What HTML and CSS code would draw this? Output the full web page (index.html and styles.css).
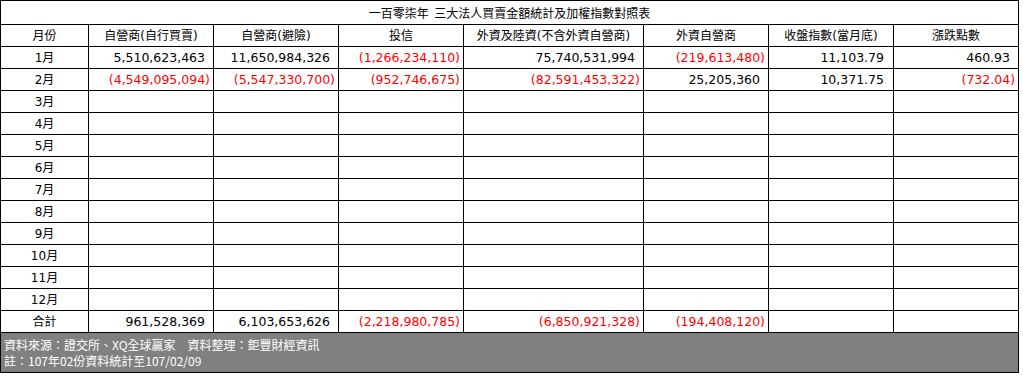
FILE: index.html
```html
<!DOCTYPE html>
<html lang="zh-Hant">
<head>
<meta charset="utf-8">
<title>一百零柒年 三大法人買賣金額統計及加權指數對照表</title>
<link rel="stylesheet" href="styles.css">
</head>
<body>
<table class="sheet">
  <colgroup>
    <col class="c-month">
    <col class="c-std">
    <col class="c-std">
    <col class="c-std">
    <col class="c-wide">
    <col class="c-std">
    <col class="c-std">
    <col class="c-std">
  </colgroup>
  <tbody>
    <tr class="title-row"><td colspan="8" class="title">一百零柒年&nbsp; 三大法人買賣金額統計及加權指數對照表</td></tr>
    <tr class="row head">
      <td>月份</td><td>自營商(自行買賣)</td><td>自營商(避險)</td><td>投信</td><td>外資及陸資(不含外資自營商)</td><td>外資自營商</td><td>收盤指數(當月底)</td><td>漲跌點數</td>
    </tr>
    <tr class="row">
      <td class="m">1月</td>
      <td class="n pos">5,510,623,463</td>
      <td class="n pos">11,650,984,326</td>
      <td class="n neg">(1,266,234,110)</td>
      <td class="n pos">75,740,531,994</td>
      <td class="n neg">(219,613,480)</td>
      <td class="n idx">11,103.79</td>
      <td class="n pos">460.93</td>
    </tr>
    <tr class="row">
      <td class="m">2月</td>
      <td class="n neg">(4,549,095,094)</td>
      <td class="n neg">(5,547,330,700)</td>
      <td class="n neg">(952,746,675)</td>
      <td class="n neg">(82,591,453,322)</td>
      <td class="n pos">25,205,360</td>
      <td class="n idx">10,371.75</td>
      <td class="n neg">(732.04)</td>
    </tr>
    <tr class="row"><td class="m">3月</td><td></td><td></td><td></td><td></td><td></td><td></td><td></td></tr>
    <tr class="row"><td class="m">4月</td><td></td><td></td><td></td><td></td><td></td><td></td><td></td></tr>
    <tr class="row"><td class="m">5月</td><td></td><td></td><td></td><td></td><td></td><td></td><td></td></tr>
    <tr class="row"><td class="m">6月</td><td></td><td></td><td></td><td></td><td></td><td></td><td></td></tr>
    <tr class="row"><td class="m">7月</td><td></td><td></td><td></td><td></td><td></td><td></td><td></td></tr>
    <tr class="row"><td class="m">8月</td><td></td><td></td><td></td><td></td><td></td><td></td><td></td></tr>
    <tr class="row"><td class="m">9月</td><td></td><td></td><td></td><td></td><td></td><td></td><td></td></tr>
    <tr class="row"><td class="m">10月</td><td></td><td></td><td></td><td></td><td></td><td></td><td></td></tr>
    <tr class="row"><td class="m">11月</td><td></td><td></td><td></td><td></td><td></td><td></td><td></td></tr>
    <tr class="row"><td class="m">12月</td><td></td><td></td><td></td><td></td><td></td><td></td><td></td></tr>
    <tr class="row">
      <td class="m">合計</td>
      <td class="n pos">961,528,369</td>
      <td class="n pos">6,103,653,626</td>
      <td class="n neg">(2,218,980,785)</td>
      <td class="n neg">(6,850,921,328)</td>
      <td class="n neg">(194,408,120)</td>
      <td></td>
      <td></td>
    </tr>
    <tr class="foot-row">
      <td colspan="8" class="foot">資料來源：證交所、XQ全球贏家　資料整理：鉅豐財經資訊<br>註：107年02份資料統計至107/02/09</td>
    </tr>
  </tbody>
</table>
</body>
</html>
```
FILE: styles.css
```css
html, body {
  margin: 0;
  padding: 0;
  background: #ffffff;
}

.sheet {
  border-collapse: collapse;
  table-layout: fixed;
  width: 1018px;
  font-family: "DejaVu Sans", "Noto Sans CJK TC", sans-serif;
  font-size: 12px;
  color: #000000;
}

.c-month { width: 88px; }
.c-std { width: 125px; }
.c-wide { width: 180px; }

.sheet td {
  border: 1px solid #000000;
  padding: 0 2px;
  white-space: nowrap;
  overflow: hidden;
  text-align: center;
  vertical-align: middle;
  line-height: 16px;
}

.title-row { height: 24px; }
.row { height: 22px; }
.foot-row { height: 40px; }

.title {
  font-family: "Noto Sans CJK TC", sans-serif;
}

.head td {
  font-family: "DejaVu Sans", "Noto Sans CJK TC", sans-serif;
}

.sheet td.n {
  text-align: right;
  font-size: 12.5px;
}

.sheet td.pos { padding-right: 8px; }
.sheet td.idx { padding-right: 9px; }
.sheet td.neg {
  padding-right: 3px;
  color: #ff0000;
}

.sheet td.foot {
  background: #808080;
  color: #ffffff;
  text-align: left;
  padding: 2px 3px 1px;
  font-family: "Noto Sans CJK TC", sans-serif;
}
```
